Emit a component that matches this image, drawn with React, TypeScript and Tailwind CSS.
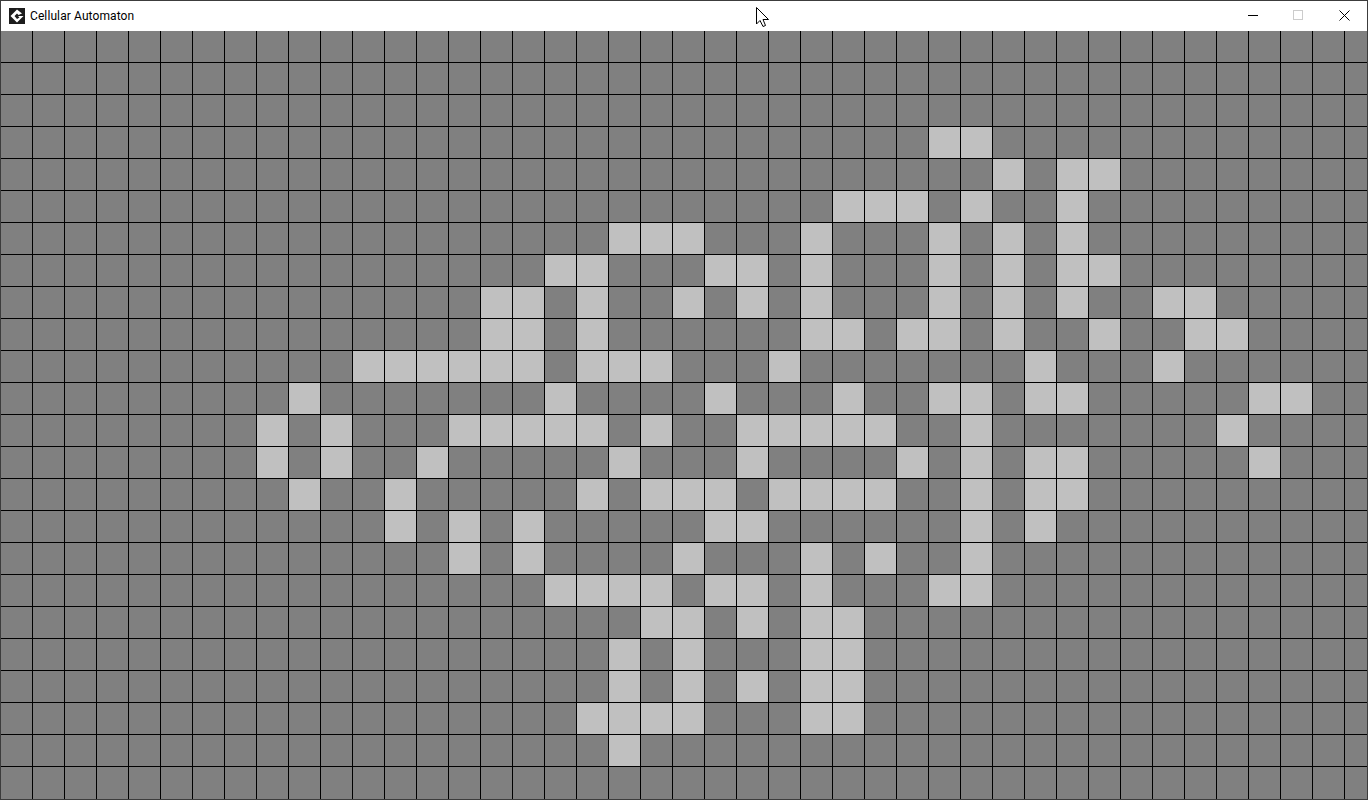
const rows: Record<number, number[]> = {
  3: [29, 30],
  4: [31, 33, 34],
  5: [26, 27, 28, 30, 33],
  6: [19, 20, 21, 25, 29, 31, 33],
  7: [17, 18, 22, 23, 25, 29, 31, 33, 34],
  8: [15, 16, 18, 21, 23, 25, 29, 31, 33, 36, 37],
  9: [15, 16, 18, 25, 26, 28, 29, 31, 34, 37, 38],
  10: [11, 12, 13, 14, 15, 16, 18, 19, 20, 24, 32, 36],
  11: [9, 17, 22, 26, 29, 30, 32, 33, 39, 40],
  12: [8, 10, 14, 15, 16, 17, 18, 20, 23, 24, 25, 26, 27, 30, 38],
  13: [8, 10, 13, 19, 23, 28, 30, 32, 33, 39],
  14: [9, 12, 18, 20, 21, 22, 24, 25, 26, 27, 30, 32, 33],
  15: [12, 14, 16, 22, 23, 30, 32],
  16: [14, 16, 21, 25, 27, 30],
  17: [17, 18, 19, 20, 22, 23, 25, 29, 30],
  18: [20, 21, 23, 25, 26],
  19: [19, 21, 25, 26],
  20: [19, 21, 23, 25, 26],
  21: [18, 19, 20, 21, 25, 26],
  22: [19],
}

const COLS = 43
const ROWS = 24

const Logo = () => (
  <svg width="16" height="16" viewBox="0 0 16 16" className="shrink-0">
    <rect width="16" height="16" fill="#1c1c1c" />
    <path
      d="M8 1.5 L1.5 8 L8 14.5 L14.5 8 H9 L10.5 9.5 L8 11 L5.5 8 L8 5.5 L9.5 7 L13 5.5 Z"
      fill="#fff"
    />
  </svg>
)

const Cursor = () => (
  <svg width="14" height="21" viewBox="0 0 14 21" className="absolute left-[755px] top-[6px]">
    <path
      d="M0.5 0.5 V17 L4 13.5 L7 19.5 L9.5 18.5 L7 12.5 H12.5 Z"
      fill="#fff"
      stroke="#000"
      strokeWidth="1"
    />
  </svg>
)

const App = () => {
  return (
    <div className="relative w-[1368px] h-[800px] overflow-hidden border border-[#3c3c3c] bg-[#808080] font-['Roboto',sans-serif]">
      <div className="flex h-[30px] items-center bg-white pl-2">
        <Logo />
        <span className="ml-[5px] text-xs tracking-[0.1px] text-black">Cellular Automaton</span>
        <div className="ml-auto flex h-full">
          <div className="flex w-[46px] items-center justify-center pl-[2px]">
            <div className="mb-px h-px w-[10px] bg-black" />
          </div>
          <div className="flex w-[46px] items-center justify-center">
            <div className="mb-[2px] h-[10px] w-[10px] border border-[#cccccc]" />
          </div>
          <div className="flex w-[46px] items-center justify-center">
            <svg width="11" height="11" viewBox="0 0 11 11" className="mb-[2px]">
              <path d="M0.5 0.5 L10.5 10.5 M10.5 0.5 L0.5 10.5" stroke="#000" strokeWidth="1" />
            </svg>
          </div>
        </div>
      </div>
      <div className="grid grid-cols-[repeat(43,32px)] auto-rows-[32px]">
        {Array.from({ length: ROWS }).map((_, r) =>
          Array.from({ length: COLS }).map((_, c) => (
            <div
              key={`${r}-${c}`}
              className={`border-r border-black ${r < ROWS - 1 ? 'border-b' : ''} ${rows[r]?.includes(c) ? 'bg-[#c0c0c0]' : 'bg-[#808080]'}`}
            />
          )),
        )}
      </div>
      <Cursor />
    </div>
  )
}

export default App
